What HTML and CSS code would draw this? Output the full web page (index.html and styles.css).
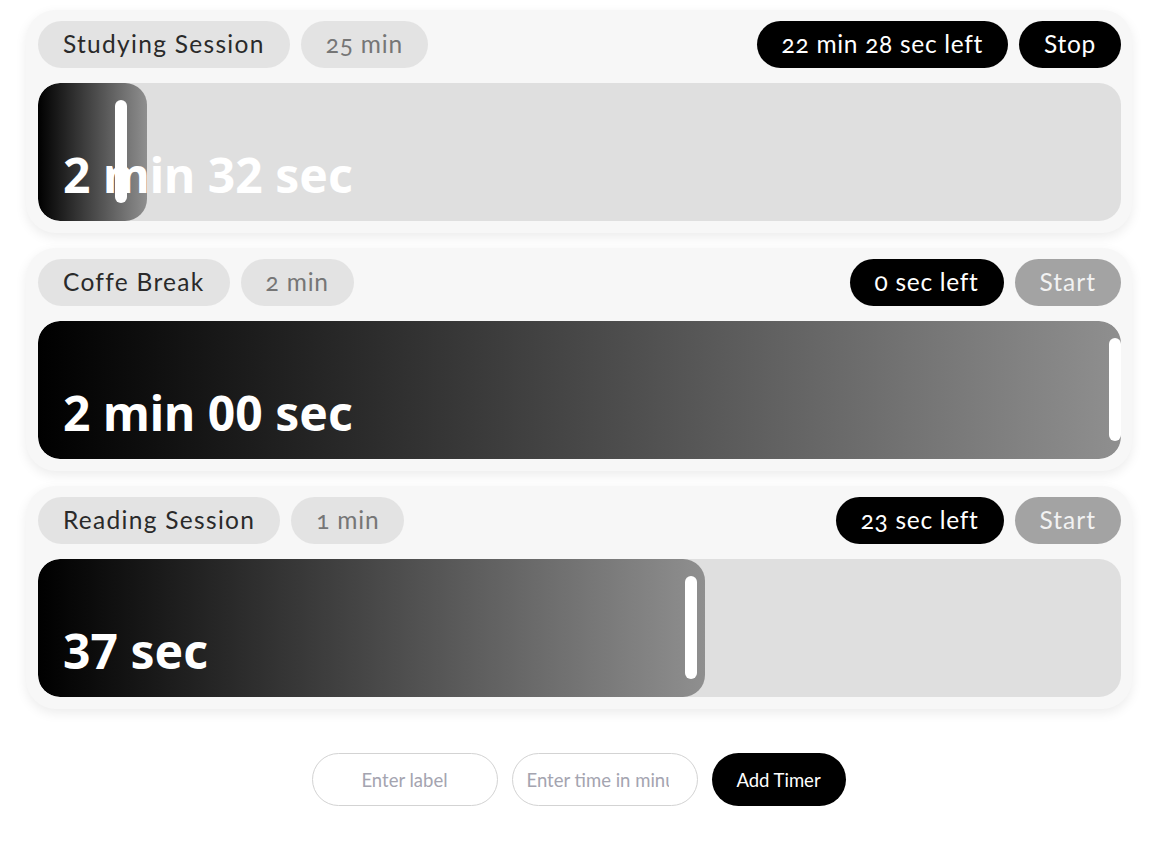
FILE: index.html
```html
<!DOCTYPE html>
<html lang="en">
<head>
<meta charset="utf-8">
<title>Timers</title>
<link rel="stylesheet" href="styles.css">
</head>
<body>
<main class="page">
  <section class="timers">
    <article class="card">
      <div class="head">
        <div class="group">
          <span class="chip label">Studying Session</span>
          <span class="chip duration">25 min</span>
        </div>
        <div class="group">
          <span class="chip dark">22 min 28 sec left</span>
          <button class="chip dark btn">Stop</button>
        </div>
      </div>
      <div class="bar">
        <div class="fill" style="width:109px"></div>
        <div class="handle" style="left:77px"></div>
        <span class="elapsed">2 min 32 sec</span>
      </div>
    </article>

    <article class="card">
      <div class="head">
        <div class="group">
          <span class="chip label">Coffe Break</span>
          <span class="chip duration">2 min</span>
        </div>
        <div class="group">
          <span class="chip dark">0 sec left</span>
          <button class="chip muted btn">Start</button>
        </div>
      </div>
      <div class="bar">
        <div class="fill" style="width:100%"></div>
        <div class="handle" style="left:1071px"></div>
        <span class="elapsed">2 min 00 sec</span>
      </div>
    </article>

    <article class="card">
      <div class="head">
        <div class="group">
          <span class="chip label">Reading Session</span>
          <span class="chip duration">1 min</span>
        </div>
        <div class="group">
          <span class="chip dark">23 sec left</span>
          <button class="chip muted btn">Start</button>
        </div>
      </div>
      <div class="bar">
        <div class="fill" style="width:667px"></div>
        <div class="handle" style="left:647px"></div>
        <span class="elapsed">37 sec</span>
      </div>
    </article>
  </section>

  <form class="add-form">
    <input class="field field-label" type="text" placeholder="Enter label">
    <input class="field field-time" type="text" placeholder="Enter time in minutes">
    <button class="add-btn" type="button">Add Timer</button>
  </form>
</main>
</body>
</html>
```

FILE: styles.css
```css
* {
  box-sizing: border-box;
}

html, body {
  margin: 0;
  padding: 0;
  background: #ffffff;
}

body {
  font-family: "Lato", "Open Sans", sans-serif;
  color: #333333;
}

.page {
  padding: 10px 24px 0 26px;
}

.timers {
  display: flex;
  flex-direction: column;
  gap: 15px;
}

.card {
  background: #f7f7f7;
  border-radius: 30px;
  padding: 11px 11px 12px 12px;
  box-shadow: 0 4px 12px rgba(0, 0, 0, 0.08);
}

.head {
  display: flex;
  justify-content: space-between;
  align-items: center;
  height: 47px;
}

.group {
  display: flex;
  gap: 11px;
}

.chip {
  display: inline-flex;
  align-items: center;
  height: 47px;
  padding: 0 25px;
  border-radius: 24px;
  font-family: "Lato", sans-serif;
  font-size: 24.5px;
  letter-spacing: 1px;
  border: none;
  line-height: 1;
  font-variant-numeric: oldstyle-nums;
}

.label {
  background: #e3e3e3;
  color: #2a2a2a;
  letter-spacing: 1.3px;
}

.duration {
  background: #e3e3e3;
  color: #767676;
  letter-spacing: 0.8px;
}

.dark {
  background: #000000;
  color: #ffffff;
  letter-spacing: 0.7px;
}

.muted {
  background: #a3a3a3;
  color: #f2f2f2;
  letter-spacing: 1px;
}

.btn {
  cursor: pointer;
}

.bar {
  position: relative;
  margin-top: 15px;
  height: 138px;
  border-radius: 22px;
  background: #dfdfdf;
  overflow: hidden;
  display: flex;
  align-items: flex-end;
  padding: 0 25px 22px;
}

.fill {
  position: absolute;
  left: 0;
  top: 0;
  bottom: 0;
  border-radius: 22px;
  background: linear-gradient(to right, #000000, #8f8f8f);
}

.handle {
  position: absolute;
  top: 17px;
  width: 12px;
  height: 103px;
  border-radius: 6px;
  background: #ffffff;
}

.elapsed {
  position: relative;
  font-family: "Noto Sans", sans-serif;
  font-weight: 700;
  font-size: 48px;
  line-height: 1;
  color: #ffffff;
}

.add-form {
  display: flex;
  justify-content: center;
  gap: 14px;
  margin-top: 44px;
  padding-right: 1px;
}

.field {
  width: 186px;
  height: 53px;
  border: 1px solid #d3d3d3;
  border-radius: 27px;
  background: #ffffff;
  font-family: "Lato", sans-serif;
  font-size: 18.5px;
  outline: none;
  color: #333333;
}

.field::placeholder {
  color: #a4a4b0;
}

.field-label {
  padding: 0 14px;
  text-align: center;
}

.field-time {
  padding: 0 28px 0 14px;
}

.add-btn {
  width: 134px;
  height: 53px;
  border: none;
  border-radius: 27px;
  background: #000000;
  color: #ffffff;
  font-family: "Lato", sans-serif;
  font-size: 18.5px;
}
```
